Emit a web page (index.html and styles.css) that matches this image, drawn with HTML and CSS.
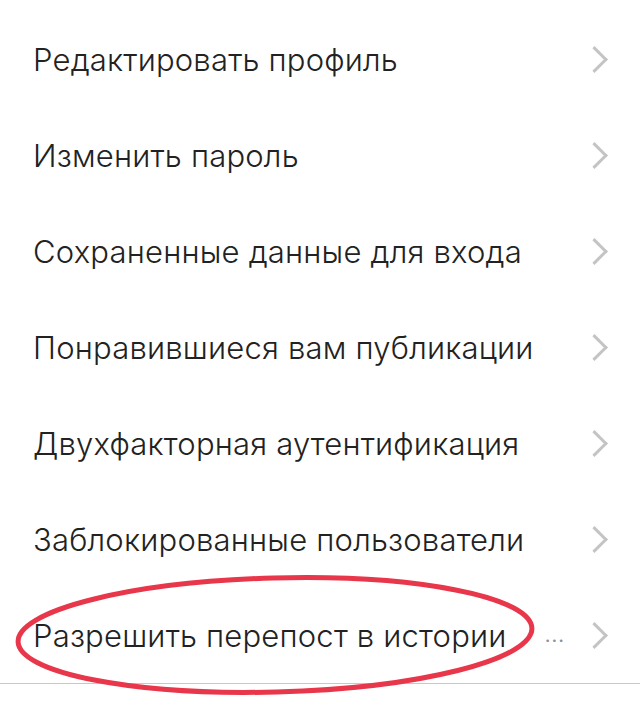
FILE: index.html
```html
<!DOCTYPE html>
<html lang="ru">
<head>
    <meta charset="UTF-8">
    <title>Настройки аккаунта</title>
    <meta name="viewport" content="width=device-width, initial-scale=1">
    <link rel="stylesheet" href="styles.css">
</head>
<body>
    <ul class="settings">
        <li class="row"><span class="label">Редактировать профиль</span><span class="chevron"></span></li>
        <li class="row"><span class="label">Изменить пароль</span><span class="chevron"></span></li>
        <li class="row"><span class="label">Сохраненные данные для входа</span><span class="chevron"></span></li>
        <li class="row"><span class="label">Понравившиеся вам публикации</span><span class="chevron"></span></li>
        <li class="row"><span class="label">Двухфакторная аутентификация</span><span class="chevron"></span></li>
        <li class="row"><span class="label">Заблокированные пользователи</span><span class="chevron"></span></li>
        <li class="row row-last">
            <span class="label">Разрешить перепост в истории</span>
            <span class="dots">...</span>
            <span class="chevron"></span>
            <!-- hand-drawn highlight round the option -->
            <svg class="mark" width="545" height="132" viewBox="0 0 545 132">
                <ellipse cx="275" cy="62" rx="257" ry="57" fill="none" stroke="#e8364a" stroke-width="5" transform="rotate(-1.5 275 62)"/>
            </svg>
        </li>
    </ul>
</body>
</html>
```

FILE: styles.css
```css
html, body {
    height: 100%;
}

body {
    margin: 0;
    padding-top: 11px;
    box-sizing: border-box;
    background: #ffffff;
    font-family: Inter, "Noto Sans", sans-serif;
    color: #222222;
}

.settings {
    list-style: none;
    margin: 0;
    padding: 0;
}

.row {
    position: relative;
    display: flex;
    align-items: center;
    height: 96px;
    padding: 0 28px 0 33px;
}

.label {
    flex: 1;
    font-size: 31px;
    font-weight: 350;
    letter-spacing: 0.2px;
}

.row-last {
    border-bottom: 1px solid #c8c8cc;
}

.dots {
    margin-right: 20px;
    font-size: 20px;
    color: #8e8e93;
    letter-spacing: 1px;
}

.chevron {
    width: 16px;
    height: 16px;
    margin-right: 8px;
    border-top: 3px solid #c4c4c7;
    border-right: 3px solid #c4c4c7;
    transform: rotate(45deg);
}

.mark {
    position: absolute;
    left: 0;
    top: -14px;
    pointer-events: none;
}
```
